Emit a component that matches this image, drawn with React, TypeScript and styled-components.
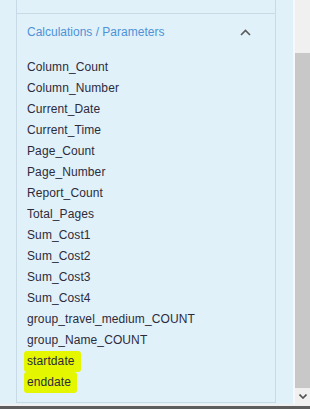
import React from 'react';
import styled, { createGlobalStyle } from 'styled-components';

const GlobalStyle = createGlobalStyle`
  html, body {
    margin: 0;
    padding: 0;
    overflow: hidden;
  }
  body {
    font-family: "Liberation Sans", Arial, sans-serif;
  }
`;

const Frame = styled.div`
  display: flex;
  flex-direction: column;
  width: 310px;
  height: 409px;
  background: #f0f0f0;
`;

const Body = styled.div`
  display: flex;
  height: 404px;
`;

const Content = styled.div`
  width: 293px;
  box-sizing: border-box;
  padding: 0 17px 1px 16px;
  background: #e1f1fa;
  display: flex;
`;

const Gutter = styled.div`
  width: 2px;
  background: #f6f8f9;
`;

const ScrollBar = styled.div`
  width: 15px;
  display: flex;
  flex-direction: column;
  background: #f0f0f0;
`;

const ScrollTrack = styled.div`
  height: 53px;
`;

const ScrollThumb = styled.div`
  flex: 1;
  background: #c8c8c8;
`;

const ScrollArrow = styled.div`
  height: 16px;
  display: flex;
  align-items: center;
  justify-content: center;
  background: #f0f0f0;
`;

const DarkBar = styled.div`
  margin-top: 2px;
  height: 3px;
  background: #5d5d5d;
`;

const Panel = styled.div`
  flex: 1;
  display: flex;
  flex-direction: column;
  border: 1px solid #c7dae5;
  border-top: none;
`;

const PrevSection = styled.div`
  height: 13px;
  border-bottom: 1px solid #c7dae5;
`;

const Header = styled.div`
  height: 35px;
  display: flex;
  align-items: center;
  justify-content: space-between;
  padding: 1px 24px 0 10px;
  box-sizing: border-box;
  color: #4e92d8;
  font-size: 12px;
`;

const List = styled.ul`
  list-style: none;
  margin: 0;
  padding: 8px 0 0 10px;
`;

const Item = styled.li`
  height: 21px;
  line-height: 21px;
  font-size: 12px;
  letter-spacing: 0.1px;
  color: #2c2b3c;
`;

const Marker = styled.span<{ $on?: boolean }>`
  display: inline-block;
  margin-left: -3px;
  padding: 0 6px 0 3px;
  border-radius: 3px;
  background: ${p => (p.$on ? '#e4f600' : 'transparent')};
`;

const items: { name: string; marked?: boolean }[] = [
  { name: 'Column_Count' },
  { name: 'Column_Number' },
  { name: 'Current_Date' },
  { name: 'Current_Time' },
  { name: 'Page_Count' },
  { name: 'Page_Number' },
  { name: 'Report_Count' },
  { name: 'Total_Pages' },
  { name: 'Sum_Cost1' },
  { name: 'Sum_Cost2' },
  { name: 'Sum_Cost3' },
  { name: 'Sum_Cost4' },
  { name: 'group_travel_medium_COUNT' },
  { name: 'group_Name_COUNT' },
  { name: 'startdate', marked: true },
  { name: 'enddate', marked: true },
];

const ChevronUp = () => (
  <svg width="11" height="7" viewBox="0 0 11 7">
    <polyline points="1,6 5.5,1.5 10,6" fill="none" stroke="#5a5a5a" strokeWidth="1.6" />
  </svg>
);

const ChevronDown = () => (
  <svg width="8" height="5" viewBox="0 0 8 5">
    <polyline points="0.5,0.5 4,4 7.5,0.5" fill="none" stroke="#505050" strokeWidth="1.6" />
  </svg>
);

export default function App() {
  return (
    <>
      <GlobalStyle />
      <Frame>
        <Body>
          <Content>
            <Panel>
              <PrevSection />
              <Header>
                <span>Calculations / Parameters</span>
                <ChevronUp />
              </Header>
              <List>
                {items.map(it => (
                  <Item key={it.name}>
                    {it.marked ? <Marker $on>{it.name}</Marker> : it.name}
                  </Item>
                ))}
              </List>
            </Panel>
          </Content>
          <Gutter />
          <ScrollBar>
            <ScrollTrack />
            <ScrollThumb />
            <ScrollArrow>
              <ChevronDown />
            </ScrollArrow>
          </ScrollBar>
        </Body>
        <DarkBar />
      </Frame>
    </>
  );
}
